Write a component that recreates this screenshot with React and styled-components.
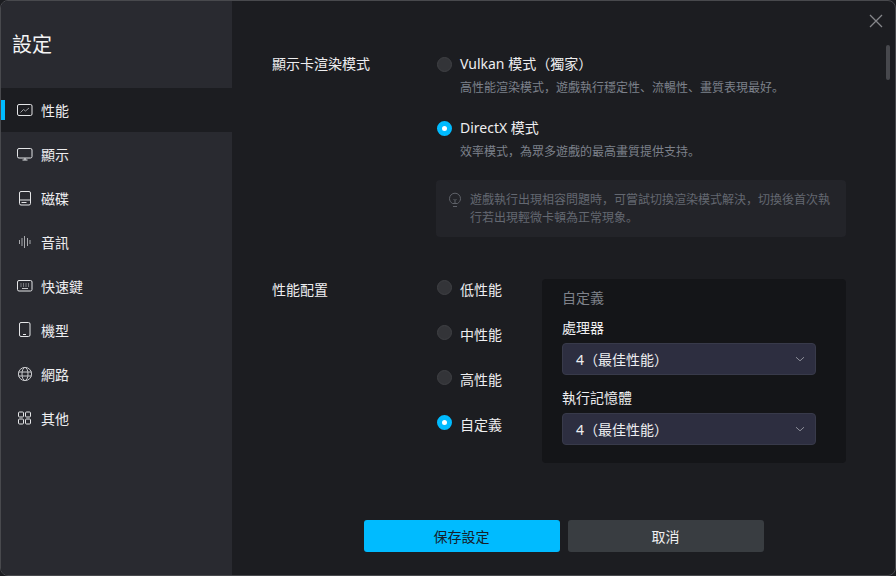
import React from "react";
import styled, { createGlobalStyle } from "styled-components";

const GlobalStyle = createGlobalStyle`
  html, body {
    margin: 0;
    padding: 0;
    background: #1c1d21;
  }
  * {
    box-sizing: border-box;
  }
  body {
    font-family: "Noto Sans", "Noto Sans CJK SC", sans-serif;
  }
`;

const navItems = [
  { key: "perf", label: "性能", active: true },
  { key: "display", label: "顯示" },
  { key: "disk", label: "磁碟" },
  { key: "audio", label: "音訊" },
  { key: "keys", label: "快速鍵" },
  { key: "phone", label: "機型" },
  { key: "net", label: "網路" },
  { key: "other", label: "其他" },
];

const NavIcon = ({ name }) => {
  const common = {
    width: 16,
    height: 16,
    viewBox: "0 0 16 16",
    fill: "none",
    stroke: "#e4e5e7",
    strokeWidth: 1,
  };
  switch (name) {
    case "perf":
      return (
        <svg {...common}>
          <rect x="0.5" y="2.5" width="14.5" height="11" rx="1.5" />
          <path d="M3.5 10.5 6.5 7.5 8.5 9 12 6" stroke="#9a9b9f" />
        </svg>
      );
    case "display":
      return (
        <svg {...common}>
          <rect x="0.5" y="2.5" width="14.5" height="9.5" rx="1.5" />
          <path d="M8 12v2M5.5 14h5" />
        </svg>
      );
    case "disk":
      return (
        <svg {...common}>
          <rect x="2.5" y="1.5" width="11" height="13.5" rx="1.5" />
          <path d="M2.5 10h11M4.5 12.5h5" />
        </svg>
      );
    case "audio":
      return (
        <svg {...common} stroke="#a8a9ad">
          <path d="M2.5 6v4M5 4v8M7.5 2v12M10.5 4v8M13 6v4" />
        </svg>
      );
    case "keys":
      return (
        <svg {...common}>
          <rect x="0.5" y="2.5" width="14.5" height="10.5" rx="1.5" />
          <path d="M3.5 6h1M6 6h1M8.5 6h1M11 6h1M3.5 8h1M6 8h1M8.5 8h1M11 8h1M5 10.5h6" stroke="#c4c5c8" />
        </svg>
      );
    case "phone":
      return (
        <svg {...common}>
          <rect x="2.5" y="0.5" width="10.5" height="14" rx="1.5" />
          <path d="M6 12.5h3" />
        </svg>
      );
    case "net":
      return (
        <svg {...common} stroke="#c9cacd">
          <circle cx="8" cy="8" r="6.6" />
          <ellipse cx="8" cy="8" rx="3" ry="6.6" />
          <path d="M1.5 6h13M1.5 10h13" />
        </svg>
      );
    default:
      return (
        <svg {...common}>
          <rect x="1.5" y="2" width="5" height="5" rx="1" />
          <rect x="8.5" y="2" width="5" height="5" rx="1" />
          <rect x="1.5" y="9" width="5" height="5" rx="1" />
          <rect x="8.5" y="9" width="5" height="5" rx="1" />
        </svg>
      );
  }
};

const Radio = ({ checked, drop, children }) => (
  <RadioLine>
    <RadioDot $checked={checked} />
    <RadioText $drop={drop}>{children}</RadioText>
  </RadioLine>
);

const Chevron = () => (
  <ChevronIcon width="10" height="6" viewBox="0 0 10 6" fill="none" stroke="#8d8f9a" strokeWidth="1">
    <path d="M1 1.2l4 3.6 4-3.6" />
  </ChevronIcon>
);

export default function App() {
  return (
    <>
      <GlobalStyle />
      <Window>
        <Sidebar>
          <Title>設定</Title>
          <Nav>
            {navItems.map((item) => (
              <NavRow key={item.key} $active={item.active}>
                <NavIcon name={item.key} />
                {item.label}
              </NavRow>
            ))}
          </Nav>
        </Sidebar>

        <Main>
          <CloseButton aria-label="close">
            <svg width="14" height="14" viewBox="0 0 14 14" stroke="#85868a" strokeWidth="1.3">
              <path d="M1 1l12 12M13 1 1 13" />
            </svg>
          </CloseButton>
          <ScrollThumb />

          <Content>
            <Section>
              <SectionLabel>顯示卡渲染模式</SectionLabel>
              <div>
                <ModeOption>
                  <Radio>Vulkan 模式（獨家）</Radio>
                  <ModeDesc>高性能渲染模式，遊戲執行穩定性、流暢性、畫質表現最好。</ModeDesc>
                </ModeOption>
                <ModeOption>
                  <Radio checked>DirectX 模式</Radio>
                  <ModeDesc>效率模式，為眾多遊戲的最高畫質提供支持。</ModeDesc>
                </ModeOption>
                <Tip>
                  <svg width="14" height="16" viewBox="0 0 14 16" fill="none" stroke="#5f6269" strokeWidth="1">
                    <path d="M4.5 11.5C2.8 10.5 1.5 8.8 1.5 6.7a5.5 5.5 0 0 1 11 0c0 2.1-1.3 3.8-3 4.8z" />
                    <path d="M5 14.5h4M5.5 7l1.5 1.5L8.5 7M7 8.5v3" />
                  </svg>
                  <TipText>遊戲執行出現相容問題時，可嘗試切換渲染模式解決，切換後首次執行若出現輕微卡頓為正常現象。</TipText>
                </Tip>
              </div>
            </Section>

            <ConfigSection>
              <ConfigLabel>性能配置</ConfigLabel>
              <PresetList>
                <Radio drop>低性能</Radio>
                <Radio drop>中性能</Radio>
                <Radio drop>高性能</Radio>
                <Radio drop checked>自定義</Radio>
              </PresetList>
              <CustomPanel>
                <PanelTitle>自定義</PanelTitle>
                <Field>
                  <FieldLabel>處理器</FieldLabel>
                  <Select>
                    4（最佳性能）
                    <Chevron />
                  </Select>
                </Field>
                <Field>
                  <FieldLabel>執行記憶體</FieldLabel>
                  <Select>
                    4（最佳性能）
                    <Chevron />
                  </Select>
                </Field>
              </CustomPanel>
            </ConfigSection>
          </Content>

          <Footer>
            <Button $primary>保存設定</Button>
            <Button>取消</Button>
          </Footer>
        </Main>
      </Window>
    </>
  );
}

const Window = styled.div`
  width: 896px;
  height: 576px;
  display: flex;
  overflow: hidden;
  border: 1px solid #48494d;
  border-radius: 8px;
  background: #1c1d21;
`;

const Sidebar = styled.aside`
  width: 231px;
  flex-shrink: 0;
  background: #292a30;
`;

const Title = styled.h1`
  height: 87px;
  margin: 0;
  padding: 29px 0 0 11px;
  font-size: 20px;
  line-height: 30px;
  font-weight: 400;
  color: #f4f4f5;
`;

const Nav = styled.nav`
  display: flex;
  flex-direction: column;
`;

const NavRow = styled.div`
  position: relative;
  height: 44px;
  display: flex;
  align-items: center;
  gap: 8px;
  padding-left: 16px;
  font-size: 14px;
  color: #eeeef0;
  background: ${(p) => (p.$active ? "#1c1d21" : "transparent")};

  &::before {
    content: "";
    display: ${(p) => (p.$active ? "block" : "none")};
    position: absolute;
    left: 0;
    top: 12px;
    width: 4px;
    height: 20px;
    background: #00bbff;
  }
`;

const Main = styled.main`
  position: relative;
  flex: 1;
  display: flex;
  flex-direction: column;
  min-width: 0;
`;

const CloseButton = styled.div`
  position: absolute;
  top: 13px;
  right: 12px;
  line-height: 0;
`;

const ScrollThumb = styled.div`
  position: absolute;
  top: 44px;
  right: 5px;
  width: 4px;
  height: 35px;
  border-radius: 2px;
  background: #47484d;
`;

const Content = styled.div`
  flex: 1;
  padding: 55px 49px 0 40px;
`;

const Section = styled.section`
  display: grid;
  grid-template-columns: 164px 1fr;
`;

const ConfigSection = styled(Section)`
  grid-template-columns: 164px 106px 304px;
  margin-top: 42px;
`;

const SectionLabel = styled.div`
  font-size: 14px;
  line-height: 16px;
  color: #eeeef0;
`;

const ConfigLabel = styled(SectionLabel)`
  padding-top: 3px;
`;

const ModeOption = styled.div`
  & + & {
    margin-top: 23px;
  }
`;

const RadioLine = styled.div`
  display: flex;
  align-items: center;
  gap: 8px;
  height: 16px;
  padding-left: 1px;
  font-size: 14px;
  line-height: 16px;
  color: #eeeef0;
`;

const RadioDot = styled.span`
  width: 15px;
  height: 15px;
  flex-shrink: 0;
  border-radius: 50%;
  background: ${(p) => (p.$checked ? "#fff" : "#333438")};
  border: ${(p) => (p.$checked ? "5px solid #00bbff" : "1px solid #3f4044")};
`;

const RadioText = styled.span`
  margin-top: ${(p) => (p.$drop ? "6px" : "0")};
`;

const ModeDesc = styled.div`
  margin: 7px 0 0 24px;
  font-size: 12px;
  line-height: 18px;
  color: #7d818b;
`;

const Tip = styled.div`
  display: flex;
  gap: 8px;
  height: 57px;
  margin-top: 19px;
  padding: 11px 10px 0 12px;
  border-radius: 4px;
  background: #232429;

  svg {
    flex-shrink: 0;
    margin-top: 1px;
  }
`;

const TipText = styled.div`
  width: 362px;
  font-size: 12px;
  line-height: 18px;
  color: #646871;
`;

const PresetList = styled.div`
  display: flex;
  flex-direction: column;
  gap: 29px;
`;

const CustomPanel = styled.div`
  height: 184px;
  padding: 9px 30px 0 20px;
  border-radius: 4px;
  background: #141518;
`;

const PanelTitle = styled.div`
  font-size: 14px;
  line-height: 20px;
  color: #7f828a;
`;

const Field = styled.div`
  margin-top: 10px;

  & + & {
    margin-top: 13px;
  }
`;

const FieldLabel = styled.div`
  font-size: 14px;
  line-height: 20px;
  margin-bottom: 5px;
  color: #eeeef0;
`;

const Select = styled.div`
  height: 32px;
  display: flex;
  align-items: center;
  justify-content: space-between;
  padding: 0 10px 0 13px;
  border-radius: 4px;
  border: 1px solid #383a4a;
  background: #2d2e40;
  font-size: 14px;
  color: #eeeef0;
`;

const ChevronIcon = styled.svg`
  flex-shrink: 0;
`;

const Footer = styled.div`
  display: flex;
  justify-content: center;
  gap: 8px;
  padding-bottom: 23px;
`;

const Button = styled.div`
  width: 196px;
  height: 32px;
  display: flex;
  align-items: center;
  justify-content: center;
  border-radius: 3px;
  font-size: 14px;
  background: ${(p) => (p.$primary ? "#00bbff" : "#393d41")};
  color: ${(p) => (p.$primary ? "#16202a" : "#f0f0f2")};
`;
